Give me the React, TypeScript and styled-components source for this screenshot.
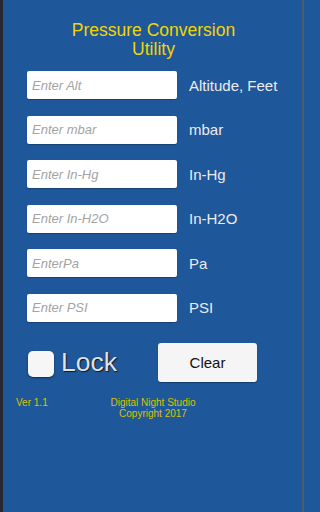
import React from 'react'
import styled, { createGlobalStyle } from 'styled-components'

const GlobalStyle = createGlobalStyle`
  html, body {
    margin: 0;
    padding: 0;
    background: #1f579b;
  }
  * {
    box-sizing: border-box;
  }
`

const Screen = styled.div`
  width: 304px;
  height: 512px;
  background: #1f579b;
  border-left: 3px solid #262a30;
  border-right: 2px solid #4a5c70;
  display: flex;
  flex-direction: column;
  font-family: 'Liberation Sans', Arial, sans-serif;
  padding-top: 21px;
`

const Title = styled.h1`
  margin: 0;
  font-size: 17.5px;
  line-height: 19px;
  font-weight: normal;
  color: #f3d500;
  text-align: center;
  padding-left: 2px;
`

const Fields = styled.div`
  display: flex;
  flex-direction: column;
  gap: 16.6px;
  margin-top: 12px;
  padding-left: 24px;
`

const Row = styled.div`
  display: flex;
  align-items: center;
  height: 28px;
`

const Field = styled.input`
  width: 150px;
  height: 28px;
  border: none;
  border-radius: 2px;
  background: #ffffff;
  box-shadow: 0 1px 1px rgba(0, 0, 0, 0.25);
  padding: 0 5px;
  font-family: 'Liberation Sans', Arial, sans-serif;
  font-size: 13px;
  color: #222;
  outline: none;
  &::placeholder {
    color: #a3a3a3;
    font-style: italic;
  }
`

const Unit = styled.span`
  margin-left: 12px;
  font-size: 15px;
  color: #ececec;
`

const Controls = styled.div`
  display: flex;
  align-items: center;
  margin-top: 21px;
  padding-left: 25px;
  height: 39px;
`

const LockLabel = styled.label`
  display: flex;
  align-items: center;
  gap: 7px;
  width: 130px;
  cursor: pointer;
`

const Box = styled.span`
  width: 26px;
  height: 26px;
  border-radius: 5px;
  background: #f6f6f6;
  box-shadow: 0 1px 2px rgba(0, 0, 0, 0.5);
  margin-top: 4px;
`

const LockText = styled.span`
  font-size: 26.5px;
  color: #e2e2e2;
  text-shadow: 1px 1px 1px rgba(0, 0, 0, 0.7), 0 0 1px rgba(0, 0, 0, 0.5);
`

const ClearButton = styled.button`
  width: 99px;
  height: 39px;
  border: none;
  border-radius: 3px;
  background: #f5f5f5;
  box-shadow: 0 1px 1px rgba(0, 0, 0, 0.3);
  font-family: 'Liberation Sans', Arial, sans-serif;
  font-size: 15px;
  color: #111;
`

const Footer = styled.div`
  display: grid;
  grid-template-columns: 1fr auto 1fr;
  margin-top: 15px;
  padding-left: 13px;
  font-size: 10px;
  line-height: 11px;
  color: #d9c200;
`

const Version = styled.span`
  justify-self: start;
`

const Credits = styled.span`
  text-align: center;
  padding-right: 12px;
`

const fields = [
  { placeholder: 'Enter Alt', unit: 'Altitude, Feet' },
  { placeholder: 'Enter mbar', unit: 'mbar' },
  { placeholder: 'Enter In-Hg', unit: 'In-Hg' },
  { placeholder: 'Enter In-H2O', unit: 'In-H2O' },
  { placeholder: 'EnterPa', unit: 'Pa' },
  { placeholder: 'Enter PSI', unit: 'PSI' },
]

export default function App() {
  return (
    <>
      <GlobalStyle />
      <Screen>
        <Title>
          Pressure Conversion
          <br />
          Utility
        </Title>
        <Fields>
          {fields.map((f) => (
            <Row key={f.unit}>
              <Field placeholder={f.placeholder} />
              <Unit>{f.unit}</Unit>
            </Row>
          ))}
        </Fields>
        <Controls>
          <LockLabel>
            <Box />
            <LockText>Lock</LockText>
          </LockLabel>
          <ClearButton>Clear</ClearButton>
        </Controls>
        <Footer>
          <Version>Ver 1.1</Version>
          <Credits>
            Digital Night Studio
            <br />
            Copyright 2017
          </Credits>
          <span />
        </Footer>
      </Screen>
    </>
  )
}
